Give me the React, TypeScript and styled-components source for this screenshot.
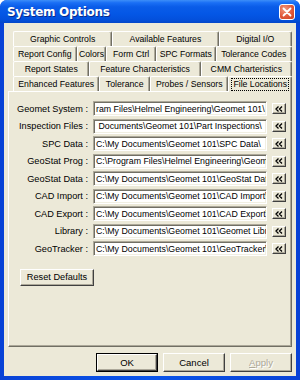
import React from "react";
import { createGlobalStyle, styled } from "styled-components";

const UI_FONT = `"Liberation Sans", Arial, sans-serif`;

const TAB_ROWS = [
  [
    { label: "Graphic Controls", width: 100 },
    { label: "Available Features", width: 107 },
    { label: "Digital I/O", width: 74 },
  ],
  [
    { label: "Report Config", width: 64 },
    { label: "Colors", width: 30 },
    { label: "Form Ctrl", width: 50 },
    { label: "SPC Formats", width: 60 },
    { label: "Tolerance Codes", width: 77 },
  ],
  [
    { label: "Report States", width: 77 },
    { label: "Feature Characteristics", width: 112 },
    { label: "CMM Charteristics", width: 92 },
  ],
  [
    { label: "Enhanced Features", width: 87 },
    { label: "Tolerance", width: 51 },
    { label: "Probes / Sensors", width: 79 },
    { label: "File Locations", width: 64, selected: true },
  ],
];

const LOCATIONS = [
  { label: "Geomet System :", path: "ram Files\\Helmel Engineering\\Geomet 101\\" },
  { label: "Inspection Files :", path: " Documents\\Geomet 101\\Part Inspections\\" },
  { label: "SPC Data :", path: "C:\\My Documents\\Geomet 101\\SPC Data\\" },
  { label: "GeoStat Prog :", path: "C:\\Program Files\\Helmel Engineering\\Geomet 101\\" },
  { label: "GeoStat Data :", path: "C:\\My Documents\\Geomet 101\\GeoStat Data\\" },
  { label: "CAD Import :", path: "C:\\My Documents\\Geomet 101\\CAD Import\\" },
  { label: "CAD Export :", path: "C:\\My Documents\\Geomet 101\\CAD Export\\" },
  { label: "Library :", path: "C:\\My Documents\\Geomet 101\\Geomet Library\\" },
  { label: "GeoTracker :", path: "C:\\My Documents\\Geomet 101\\GeoTracker\\" },
];

const GlobalStyle = createGlobalStyle`
  html, body {
    margin: 0;
    padding: 0;
    background: #ffffff;
  }
  * {
    box-sizing: border-box;
  }
`;

const Window = styled.div`
  width: 300px;
  height: 380px;
  display: flex;
  flex-direction: column;
  background: linear-gradient(90deg, #0842d6 0%, #0a55ea 50%, #0842d6 100%);
  border-radius: 7px 7px 0 0;
  overflow: hidden;
  font-family: ${UI_FONT};
`;

const TitleBar = styled.div`
  height: 23px;
  flex: none;
  display: flex;
  align-items: center;
  justify-content: space-between;
  padding: 0 5px 0 7px;
  background: linear-gradient(
    180deg,
    #3d8ef8 0%,
    #1a6ff5 12%,
    #0a5ce8 30%,
    #0457e6 60%,
    #0350dc 85%,
    #0346c8 100%
  );
`;

const Title = styled.span`
  color: #ffffff;
  font-family: "DejaVu Sans", sans-serif;
  font-weight: bold;
  font-size: 12px;
  letter-spacing: -0.3px;
  text-shadow: 1px 1px 0 #0a2a8a;
  margin-top: 1px;
`;

const CloseButton = styled.div`
  width: 16px;
  height: 16px;
  border: 1px solid #ffffff;
  border-radius: 3px;
  background: radial-gradient(circle at 35% 30%, #f19a7e 0%, #e1583a 55%, #c8401f 100%);
  display: flex;
  align-items: center;
  justify-content: center;
  margin-top: 1px;
`;

const Client = styled.div`
  flex: 1;
  margin: 0 4px 4px 4px;
  background: #ece9d8;
  display: flex;
  flex-direction: column;
  padding: 8px 4px 4px 4px;
`;

const TabStrip = styled.div`
  display: flex;
  flex-direction: column;
  padding-left: 5px;
`;

const TabRow = styled.div`
  display: flex;
  height: 15px;
`;

const Tab = styled.div<{ $selected?: boolean }>`
  height: ${({ $selected }) => ($selected ? "16px" : "15px")};
  margin-bottom: ${({ $selected }) => ($selected ? "-1px" : "0")};
  position: relative;
  z-index: ${({ $selected }) => ($selected ? 2 : 1)};
  display: flex;
  align-items: center;
  justify-content: center;
  background: #ece9d8;
  border-top: 1px solid #ffffff;
  border-left: 1px solid #ffffff;
  border-right: 1px solid #716f64;
  border-radius: 2px 2px 0 0;
  box-shadow: inset -1px 0 0 #aca899;
  font-size: 8.7px;
  color: #000000;
  white-space: nowrap;
  overflow: hidden;
`;

const FocusText = styled.span<{ $focus?: boolean }>`
  padding: 0 1px;
  line-height: 11px;
  outline: ${({ $focus }) => ($focus ? "1px dotted #000000" : "none")};
`;

const Panel = styled.div`
  height: 256px;
  flex: none;
  border-top: 1px solid #ffffff;
  border-left: 1px solid #ffffff;
  border-right: 1px solid #716f64;
  border-bottom: 1px solid #716f64;
  box-shadow: inset -1px -1px 0 #aca899;
  display: flex;
  flex-direction: column;
  padding: 8px 0 0 0;
`;

const FieldGrid = styled.div`
  display: grid;
  grid-template-columns: 79px 174px 14px;
  grid-auto-rows: 17.5px;
  column-gap: 5px;
  align-items: center;
`;

const FieldLabel = styled.span`
  text-align: right;
  font-size: 9.2px;
  color: #000000;
  white-space: pre;
`;

const PathBox = styled.div`
  height: 15px;
  background: #ffffff;
  border-top: 1px solid #aca899;
  border-left: 1px solid #aca899;
  border-right: 1px solid #ffffff;
  border-bottom: 1px solid #ffffff;
  box-shadow: inset 1px 1px 0 #716f64, inset -1px -1px 0 #f1efe2;
  padding: 0 2px;
  display: flex;
  align-items: center;
  font-size: 8.8px;
  color: #000000;
  white-space: pre;
  overflow: hidden;
`;

const BrowseButton = styled.div`
  width: 14px;
  height: 11px;
  background: #ece9d8;
  border-top: 1px solid #ffffff;
  border-left: 1px solid #ffffff;
  border-right: 1px solid #404040;
  border-bottom: 1px solid #404040;
  box-shadow: inset -1px -1px 0 #aca899;
  display: flex;
  align-items: center;
  justify-content: center;
  overflow: hidden;
`;

const ResetButton = styled.div`
  width: 74px;
  height: 17px;
  margin: 11px 0 0 11px;
  background: #ece9d8;
  border-top: 1px solid #ffffff;
  border-left: 1px solid #ffffff;
  border-right: 1px solid #404040;
  border-bottom: 1px solid #404040;
  box-shadow: inset -1px -1px 0 #aca899;
  display: flex;
  align-items: center;
  justify-content: center;
  font-size: 9.2px;
  color: #000000;
`;

const Footer = styled.div`
  display: flex;
  justify-content: flex-end;
  gap: 5px;
  margin-top: 6px;
`;

const DialogButton = styled.div<{ $default?: boolean }>`
  width: 62px;
  height: 19px;
  background: #ece9d8;
  border: ${({ $default }) => ($default ? "1px solid #000000" : "none")};
  display: flex;
`;

const ButtonFace = styled.div<{ $disabled?: boolean }>`
  flex: 1;
  display: flex;
  align-items: center;
  justify-content: center;
  border-top: 1px solid #ffffff;
  border-left: 1px solid #ffffff;
  border-right: 1px solid #404040;
  border-bottom: 1px solid #404040;
  box-shadow: inset -1px -1px 0 #aca899;
  font-size: 9.5px;
  color: ${({ $disabled }) => ($disabled ? "#aca899" : "#000000")};
  text-shadow: ${({ $disabled }) => ($disabled ? "1px 1px 0 #ffffff" : "none")};

  u {
    text-decoration: underline;
  }
`;

const CloseGlyph = () => (
  <svg width="10" height="10" viewBox="0 0 10 10">
    <path d="M1.5 1.5 L8.5 8.5 M8.5 1.5 L1.5 8.5" stroke="#ffffff" strokeWidth="1.8" strokeLinecap="round" />
  </svg>
);

// the two little chevrons on the browse buttons
const BackGlyph = () => (
  <svg width="8" height="6" viewBox="0 0 8 6">
    <path d="M3.5 0.5 L1 3 L3.5 5.5 M7 0.5 L4.5 3 L7 5.5" stroke="#000000" strokeWidth="1.3" fill="none" />
  </svg>
);

export default function App() {
  return (
    <>
      <GlobalStyle />
      <Window>
        <TitleBar>
          <Title>System Options</Title>
          <CloseButton>
            <CloseGlyph />
          </CloseButton>
        </TitleBar>

        <Client>
          <TabStrip>
            {TAB_ROWS.map((row, i) => (
              <TabRow key={i}>
                {row.map((tab) => (
                  <Tab key={tab.label} $selected={"selected" in tab} style={{ width: tab.width }}>
                    <FocusText $focus={"selected" in tab}>{tab.label}</FocusText>
                  </Tab>
                ))}
              </TabRow>
            ))}
          </TabStrip>

          <Panel>
            <FieldGrid>
              {LOCATIONS.map((loc) => (
                <React.Fragment key={loc.label}>
                  <FieldLabel>{loc.label}</FieldLabel>
                  <PathBox>{loc.path}</PathBox>
                  <BrowseButton>
                    <BackGlyph />
                  </BrowseButton>
                </React.Fragment>
              ))}
            </FieldGrid>
            <ResetButton>Reset Defaults</ResetButton>
          </Panel>

          <Footer>
            <DialogButton $default>
              <ButtonFace>OK</ButtonFace>
            </DialogButton>
            <DialogButton>
              <ButtonFace>Cancel</ButtonFace>
            </DialogButton>
            <DialogButton>
              <ButtonFace $disabled>
                <u>A</u>pply
              </ButtonFace>
            </DialogButton>
          </Footer>
        </Client>
      </Window>
    </>
  );
}
